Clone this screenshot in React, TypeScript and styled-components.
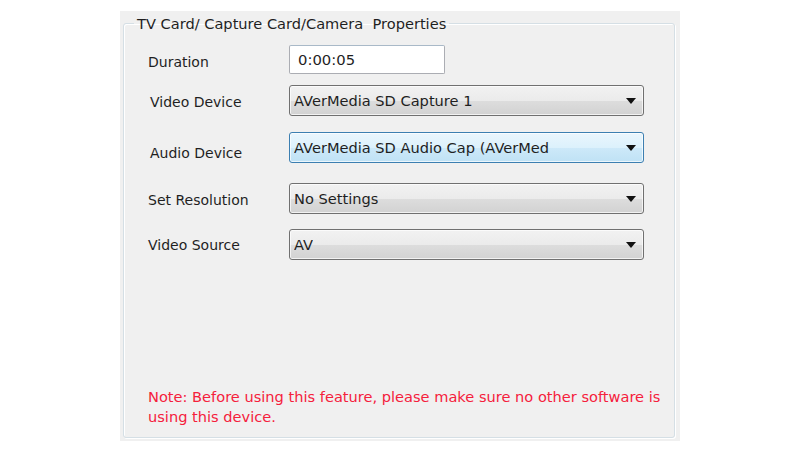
import React from 'react';
import styled, { createGlobalStyle } from 'styled-components';

const GlobalStyle = createGlobalStyle`
  html, body {
    margin: 0;
    padding: 0;
    background: #ffffff;
  }
  body {
    font-family: 'DejaVu Sans', 'Liberation Sans', sans-serif;
    font-size: 14px;
    color: #1f1f1f;
  }
`;

type Field = {
  label: string;
  value: string;
  kind: 'input' | 'select';
  active?: boolean;
  gap: number;
  drop: number;
  indent: number;
};

const fields: Field[] = [
  { label: 'Duration', value: '0:00:05', kind: 'input', gap: 13, drop: 5, indent: 0 },
  { label: 'Video Device', value: 'AVerMedia SD Capture 1', kind: 'select', gap: 11, drop: 3, indent: 2 },
  {
    label: 'Audio Device',
    value: 'AVerMedia SD Audio Cap (AVerMed',
    kind: 'select',
    active: true,
    gap: 16,
    drop: 11,
    indent: 2,
  },
  { label: 'Set Resolution', value: 'No Settings', kind: 'select', gap: 20, drop: 3, indent: 0 },
  { label: 'Video Source', value: 'AV', kind: 'select', gap: 15, drop: 1, indent: 0 },
];

const Arrow = () => (
  <svg width="10" height="6" viewBox="0 0 10 6">
    <path d="M0 0 H10 L5 6 Z" fill="#111" />
  </svg>
);

export default function App() {
  return (
    <>
      <GlobalStyle />
      <Panel>
        <Group>
          <Caption>TV Card/ Capture Card/Camera&nbsp; Properties</Caption>
          <Body>
            {fields.map((f) => (
              <Row key={f.label} $gap={f.gap}>
                <Label $drop={f.drop} $indent={f.indent}>
                  {f.label}
                </Label>
                {f.kind === 'input' ? (
                  <TextBox>{f.value}</TextBox>
                ) : (
                  <Combo $active={!!f.active}>
                    <ComboText>{f.value}</ComboText>
                    <Arrow />
                  </Combo>
                )}
              </Row>
            ))}
            <Note>
              Note: Before using this feature, please make sure no other software is
              <br />
              using this device.
            </Note>
          </Body>
        </Group>
      </Panel>
    </>
  );
}

const Panel = styled.div`
  display: flex;
  box-sizing: border-box;
  width: 560px;
  height: 430px;
  margin: 11px 0 0 120px;
  padding: 4px 5px 3px 3px;
  background: #f0f0f0;
`;

const Group = styled.fieldset`
  display: flex;
  flex-direction: column;
  flex: 1;
  min-width: 0;
  margin: 0;
  padding: 0;
  border: 1px solid #d5dfe5;
  border-radius: 3px;
  box-shadow: inset 1px 1px 0 #ffffff, 1px 1px 0 #ffffff;
`;

const Caption = styled.legend`
  margin-left: 10px;
  padding: 0 3px;
  line-height: 17px;
  font-size: 14.6px;
  color: #1f1f1f;
`;

const Body = styled.div`
  display: flex;
  flex-direction: column;
  flex: 1;
  padding-left: 24px;
`;

const Row = styled.div<{ $gap: number }>`
  display: flex;
  align-items: center;
  margin-top: ${(p) => p.$gap}px;
`;

const Label = styled.div<{ $drop: number; $indent: number }>`
  box-sizing: border-box;
  width: 141px;
  padding-left: ${(p) => p.$indent}px;
  margin-top: ${(p) => p.$drop}px;
  white-space: nowrap;
`;

const TextBox = styled.div`
  box-sizing: border-box;
  width: 156px;
  height: 29px;
  padding: 0 8px;
  display: flex;
  align-items: center;
  font-size: 14.8px;
  background: #ffffff;
  border: 1px solid #abadb3;
  border-top-color: #a9b9c8;
  border-radius: 2px;
`;

const Combo = styled.div<{ $active: boolean }>`
  box-sizing: border-box;
  width: 355px;
  height: 31px;
  padding: 0 7px 0 4px;
  display: flex;
  align-items: center;
  justify-content: space-between;
  font-size: 14.6px;
  border-radius: 3px;
  border: 1px solid ${(p) => (p.$active ? '#3c7fb1' : '#707070')};
  background: ${(p) =>
    p.$active
      ? 'linear-gradient(#eaf6fd 0%, #dcf1fc 50%, #cde9f9 51%, #bfe2f5 100%)'
      : 'linear-gradient(#f2f2f2 0%, #ebebeb 50%, #dddddd 51%, #d2d2d2 100%)'};
  box-shadow: inset 0 0 0 1px rgba(255, 255, 255, 0.7);
`;

const ComboText = styled.span`
  white-space: nowrap;
  overflow: hidden;
`;

const Note = styled.div`
  margin-top: auto;
  padding-bottom: 10px;
  line-height: 20px;
  font-size: 14.6px;
  color: #f5203c;
`;
